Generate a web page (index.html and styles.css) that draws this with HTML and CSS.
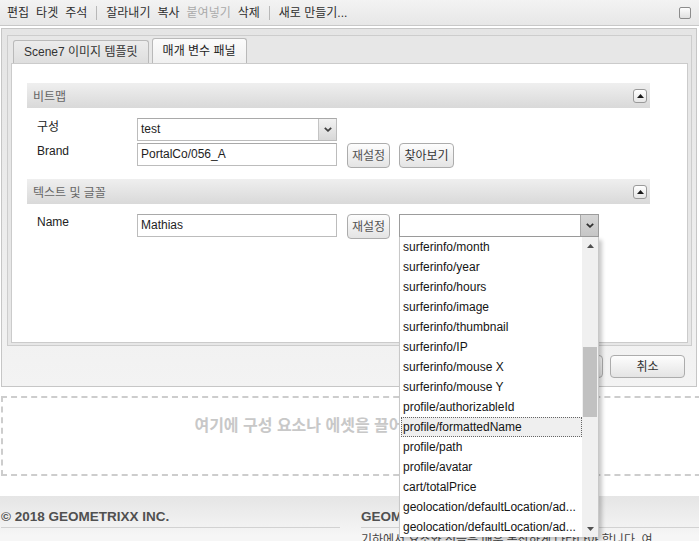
FILE: index.html
```html
<!DOCTYPE html>
<html lang="ko">
<head>
<meta charset="utf-8">
<title>매개 변수 패널</title>
<link rel="stylesheet" href="styles.css">
</head>
<body>
<div class="toolbar">
  <div class="tb-items">
    <span>편집</span><span>타겟</span><span>주석</span>
    <span class="sep"></span>
    <span>잘라내기</span><span>복사</span><span class="dis">붙여넣기</span><span>삭제</span>
    <span class="sep"></span>
    <span>새로 만들기...</span>
  </div>
  <span class="tb-check"></span>
</div>

<div class="dialog">
  <div class="tabpanel">
    <div class="tabstrip">
      <div class="tab">Scene7 이미지 템플릿</div>
      <div class="tab active">매개 변수 패널</div>
    </div>
    <div class="tabbody">
      <div class="section">
        <div class="sec-head"><span>비트맵</span><span class="collapse"><svg width="7" height="4" viewBox="0 0 7 4"><path d="M0 4L3.5 0L7 4Z" fill="#1a1a1a"/></svg></span></div>
        <div class="sec-body">
          <div class="row">
            <label class="ko">구성</label>
            <div class="field select"><span class="val">test</span><span class="arrow"><svg width="8" height="5" viewBox="0 0 8 5"><path d="M0.8 0.8L4 3.8L7.2 0.8" fill="none" stroke="#404040" stroke-width="1.8"/></svg></span></div>
          </div>
          <div class="row">
            <label>Brand</label>
            <div class="field"><span class="val">PortalCo/056_A</span></div>
            <button class="btn b-reset">재설정</button>
            <button class="btn b-browse">찾아보기</button>
          </div>
        </div>
      </div>
      <div class="section">
        <div class="sec-head"><span>텍스트 및 글꼴</span><span class="collapse"><svg width="7" height="4" viewBox="0 0 7 4"><path d="M0 4L3.5 0L7 4Z" fill="#1a1a1a"/></svg></span></div>
        <div class="sec-body">
          <div class="row">
            <label>Name</label>
            <div class="field"><span class="val">Mathias</span></div>
            <button class="btn b-reset">재설정</button>
            <div class="field combo">
              <span class="val"></span>
              <span class="arrow"><svg width="8" height="5" viewBox="0 0 8 5"><path d="M0.8 0.8L4 3.8L7.2 0.8" fill="none" stroke="#303030" stroke-width="1.8"/></svg></span>
              <div class="combo-list">
                <ul class="items">
                  <li>surferinfo/month</li>
                  <li>surferinfo/year</li>
                  <li>surferinfo/hours</li>
                  <li>surferinfo/image</li>
                  <li>surferinfo/thumbnail</li>
                  <li>surferinfo/IP</li>
                  <li>surferinfo/mouse X</li>
                  <li>surferinfo/mouse Y</li>
                  <li>profile/authorizableId</li>
                  <li class="sel">profile/formattedName</li>
                  <li>profile/path</li>
                  <li>profile/avatar</li>
                  <li>cart/totalPrice</li>
                  <li>geolocation/defaultLocation/ad...</li>
                  <li>geolocation/defaultLocation/ad...</li>
                </ul>
                <div class="vscroll">
                  <span class="sb-arrow"><svg width="7" height="4" viewBox="0 0 7 4"><path d="M0 4L3.5 0L7 4Z" fill="#505050"/></svg></span>
                  <span class="thumb"></span>
                  <span class="sb-arrow down"><svg width="7" height="4" viewBox="0 0 7 4"><path d="M0 0L3.5 4L7 0Z" fill="#505050"/></svg></span>
                </div>
              </div>
            </div>
          </div>
        </div>
      </div>
    </div>
  </div>
  <div class="dlg-buttons">
    <button class="btn dlg-btn">확인</button>
    <button class="btn dlg-btn">취소</button>
  </div>
</div>

<div class="dropzone">여기에 구성 요소나 에셋을 끌어 놓으십시오</div>

<div class="footer">
  <div class="fcol c1"><h3>© 2018 GEOMETRIXX INC.</h3></div>
  <div class="fcol c2"><h3>GEOMETRIXX 소개</h3><p>기하에서 요소와 선들은 매우 복잡하게 나타나야 합니다. 여</p></div>
</div>
</body>
</html>
```
FILE: styles.css
```css
html, body {
  margin: 0;
  padding: 0;
  overflow: hidden;
}
body {
  width: 699px;
  height: 541px;
  font-family: "Liberation Sans", "Noto Sans CJK KR", sans-serif;
  font-size: 12px;
  color: #333;
  background: #fff;
}

/* toolbar */
.toolbar {
  height: 25px;
  border-bottom: 1px solid #c8c8c8;
  background: linear-gradient(#f3f3f3, #e7e7e7);
  display: flex;
  align-items: center;
  justify-content: space-between;
  padding: 0 8px 0 7px;
}
.tb-items {
  display: flex;
  align-items: center;
  gap: 7px;
  line-height: 16px;
  color: #2e2e2e;
}
.tb-items .dis { color: #aaa; }
.sep {
  width: 1px;
  height: 14px;
  background: #b8b8b8;
  margin: 0 2px 0 2px;
}
.tb-check {
  width: 10px;
  height: 10px;
  border: 1px solid #8c8c8c;
  border-radius: 2px;
  background: linear-gradient(#fdfdfd, #e0e0e0);
}

/* dialog */
.dialog {
  margin: 2px 0 0 1px;
  width: 696px;
  box-sizing: border-box;
  border: 1px solid #c6c6c6;
  background: linear-gradient(#e5e5e5, #f3f3f3);
  padding: 6px 4px 8px 5px;
}
.tabpanel {
  border: 1px solid #cdcdcd;
  background: #e7e7e7;
  padding: 0 3px 2px 3px;
}
.tabstrip {
  height: 27px;
  display: flex;
  align-items: flex-end;
  gap: 3px;
  padding-left: 2px;
}
.tab {
  height: 22px;
  line-height: 22px;
  border: 1px solid #b9b9b9;
  border-bottom: none;
  border-radius: 3px 3px 0 0;
  background: linear-gradient(#ececec, #dedede);
  padding: 0 10px;
  color: #333;
}
.tab.active {
  height: 24px;
  line-height: 25px;
  background: linear-gradient(#fbfbfb, #f0f0f0);
  color: #222;
}
.tabbody {
  height: 280px;
  box-sizing: border-box;
  border: 1px solid #cbcbcb;
  background: #fff;
  padding: 19px 0 0 15px;
}

/* sections */
.section { width: 623px; }
.section + .section { margin-top: 11px; }
.sec-head {
  height: 25px;
  background: linear-gradient(#efefef, #d9d9d9);
  display: flex;
  align-items: center;
  justify-content: space-between;
  padding: 0 3px 0 6px;
  color: #666;
}
.collapse {
  width: 12px;
  height: 12px;
  border: 1px solid #9a9a9a;
  border-radius: 3px;
  background: linear-gradient(#ffffff, #e6e6e6);
  display: flex;
  align-items: center;
  justify-content: center;
}
.collapse svg { display: block; }
.sec-body {
  padding: 10px 0 0 10px;
  display: flex;
  flex-direction: column;
  gap: 2px;
}
.row {
  display: flex;
  align-items: flex-start;
}
.row label {
  width: 100px;
  padding-top: 0;
  line-height: 16px;
  color: #222;
}
.row label.ko { padding-top: 1px; }

/* fields */
.field {
  width: 200px;
  height: 23px;
  box-sizing: border-box;
  border: 1px solid #bcbcbc;
  border-top-color: #a9a9a9;
  background: #fff;
  display: flex;
  line-height: 21px;
  color: #1e1e1e;
}
.field .val {
  flex: 1;
  padding-left: 3px;
  white-space: nowrap;
  overflow: hidden;
}
.field .arrow {
  width: 17px;
  border-left: 1px solid #c4c4c4;
  background: linear-gradient(#f2f2f2, #d8d8d8);
  display: flex;
  align-items: center;
  justify-content: center;
}
.field .arrow svg { display: block; }
.combo {
  position: relative;
  margin-left: 9px;
  border-color: #9c9c9c;
}
.combo .arrow {
  width: 17px;
  border-left-color: #a8a8a8;
  background: linear-gradient(#d6d6d6, #c6c6c6);
}

/* buttons */
.btn {
  height: 25px;
  box-sizing: border-box;
  border: 1px solid #acacac;
  border-radius: 4px;
  background: linear-gradient(#fdfdfd, #e4e4e4);
  font: inherit;
  color: #555;
  padding: 0;
  line-height: 22px;
}
.b-reset { width: 43px; margin-left: 10px; }
.b-browse { width: 55px; margin-left: 9px; color: #333; }

/* dropdown list */
.combo-list {
  position: absolute;
  top: 22px;
  left: -1px;
  width: 200px;
  height: 300px;
  box-sizing: border-box;
  border-left: 1px solid #c8c8c8;
  border-right: 1px solid #c8c8c8;
  background: #fff;
  display: flex;
  box-shadow: 3px 3px 4px rgba(0, 0, 0, 0.22);
  z-index: 5;
}
.items {
  list-style: none;
  margin: 0;
  padding: 0;
  flex: 1;
  min-width: 0;
}
.items li {
  height: 20px;
  line-height: 21px;
  padding-left: 3px;
  white-space: nowrap;
  overflow: hidden;
  color: #151515;
}
.items li.sel {
  background: #efefef;
  outline: 1px dotted #666;
  outline-offset: -1px;
  padding-left: 2px;
  margin-left: 1px;
}
.vscroll {
  width: 16px;
  background: #f0f0f0;
  display: flex;
  flex-direction: column;
  align-items: center;
}
.sb-arrow {
  height: 17px;
  display: flex;
  align-items: center;
  justify-content: center;
}
.sb-arrow svg { display: block; }
.sb-arrow.down { margin-top: auto; }
.thumb {
  width: 14px;
  height: 70px;
  margin-top: 93px;
  background: #c1c1c1;
}

/* dialog buttons */
.dlg-buttons {
  display: flex;
  justify-content: flex-end;
  gap: 7px;
  padding: 9px 7px 0 0;
}
.dlg-btn {
  width: 75px;
  height: 23px;
  line-height: 20px;
  color: #333;
}

/* drop zone */
.dropzone {
  margin: 9px 0 0 1px;
  width: 720px;
  height: 80px;
  box-sizing: border-box;
  border: 2px dashed #cdcdcd;
  padding: 17px 46px 0 0;
  text-align: center;
  font-size: 16px;
  font-weight: bold;
  line-height: 22px;
  color: #c8c8c8;
  white-space: nowrap;
}

/* footer */
.footer {
  margin-top: 20px;
  height: 60px;
  background: linear-gradient(#e5e5e5, #f6f6f6 40px);
  display: flex;
  gap: 21px;
  padding: 12px 0 0 1px;
}
.fcol h3 {
  margin: 0;
  font-size: 13.5px;
  font-weight: bold;
  color: #505050;
  line-height: 17px;
  padding-bottom: 2px;
  border-bottom: 1px solid #d2d2d2;
  white-space: nowrap;
}
.c1 { width: 339px; }
.c2 { flex: 1; }
.fcol p {
  margin: 4px 0 0;
  font-size: 12px;
  line-height: 16px;
  color: #444;
  white-space: nowrap;
}
```
